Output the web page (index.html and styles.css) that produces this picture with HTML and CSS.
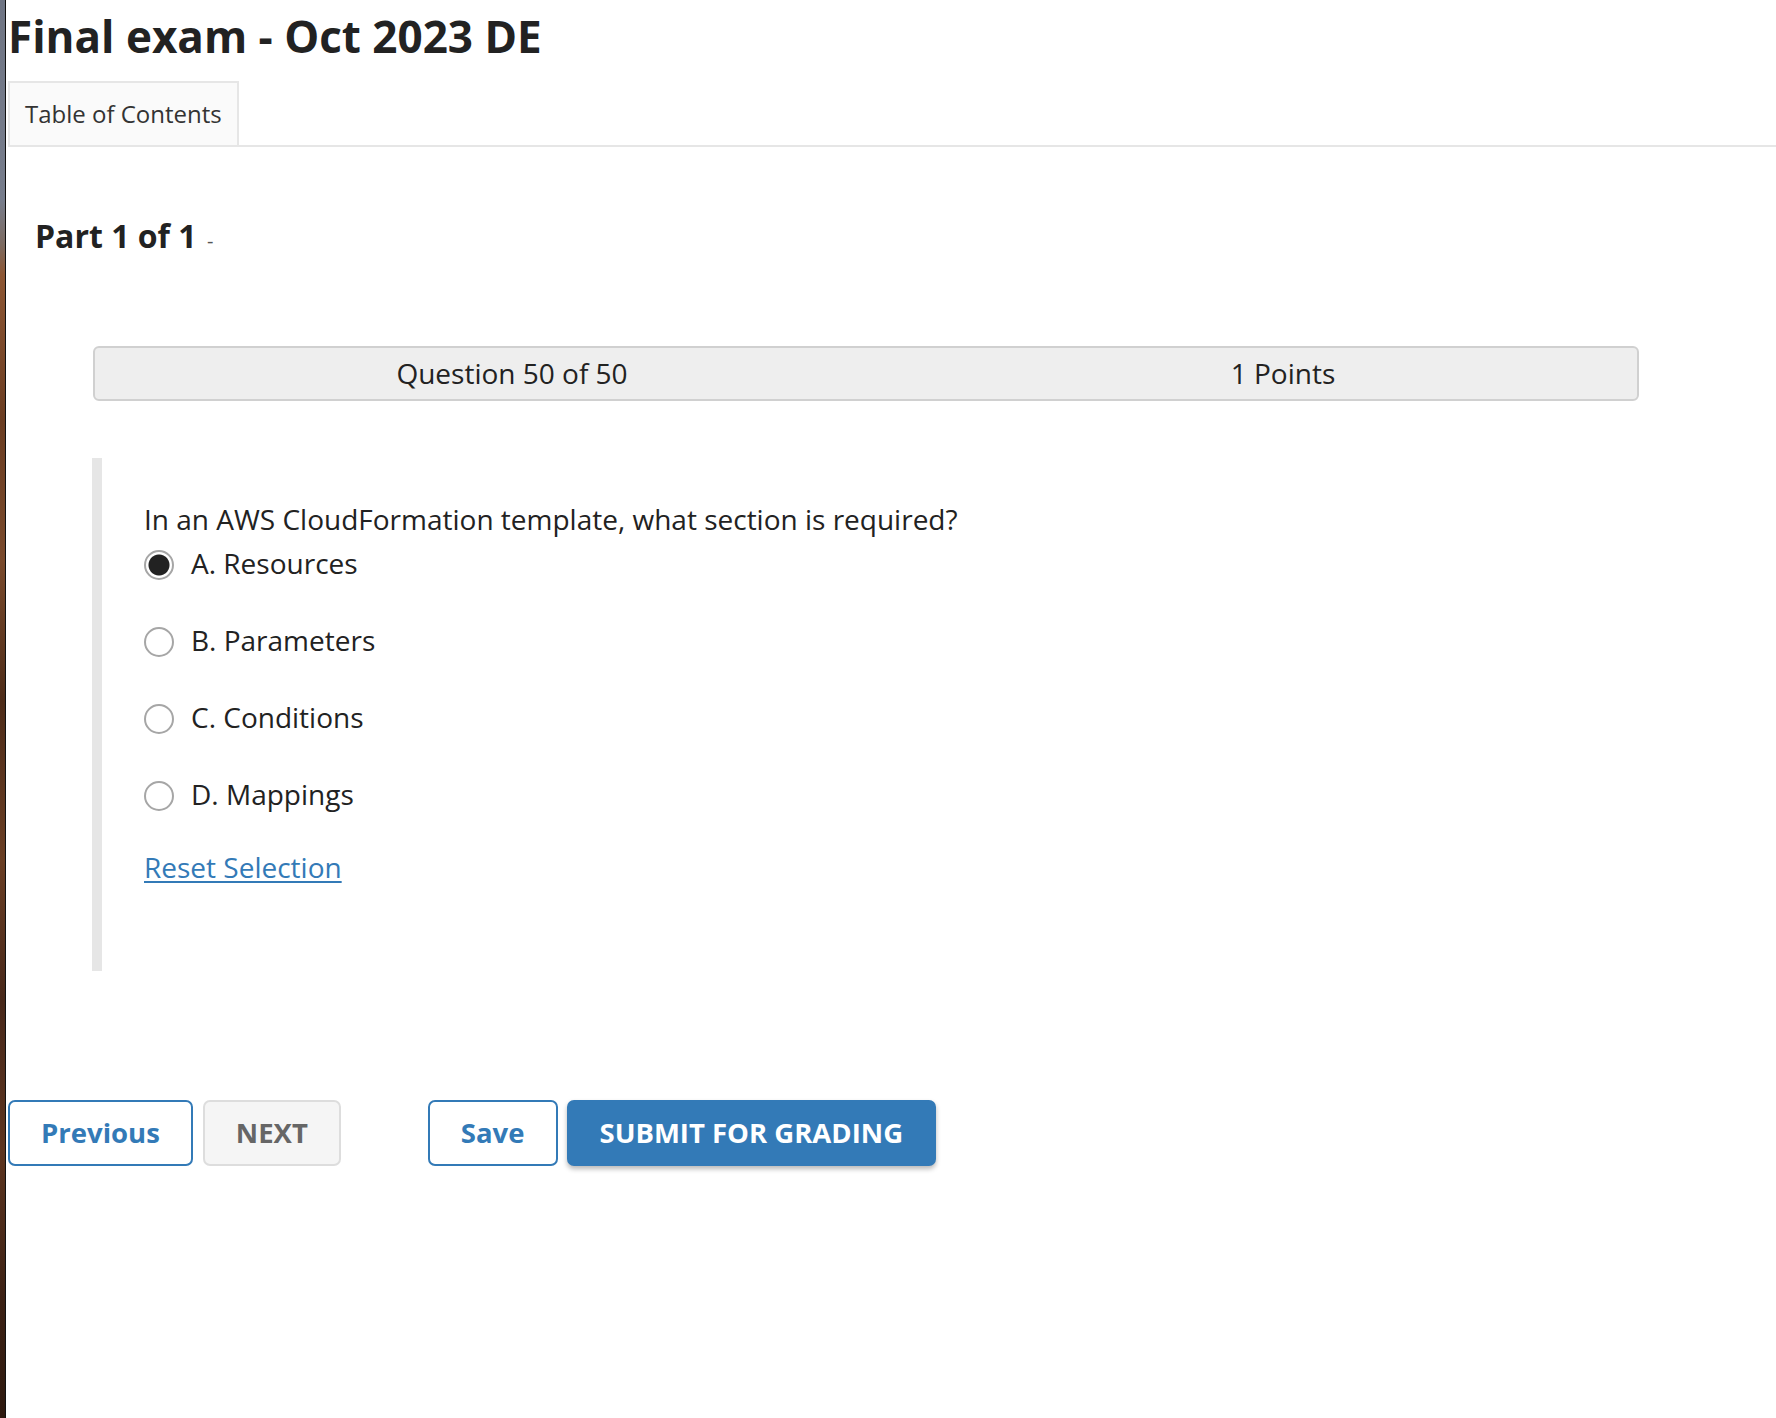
FILE: index.html
```html
<!DOCTYPE html>
<html lang="en">
<head>
<meta charset="utf-8">
<title>Final exam - Oct 2023 DE</title>
<link rel="stylesheet" href="styles.css">
</head>
<body>
<div class="desk"></div>
<main class="page">
  <h1 class="title">Final exam - Oct 2023 DE</h1>
  <div class="tabbar">
    <div class="tab">Table of Contents</div>
  </div>
  <h2 class="part">Part 1 of 1 <span class="part-dash">-</span></h2>
  <div class="qbar">
    <div class="qcell">Question 50 of 50</div>
    <div class="qcell">1 Points</div>
  </div>
  <section class="qblock">
    <p class="qtext">In an AWS CloudFormation template, what section is required?</p>
    <div class="opt"><span class="radio checked"></span><span>A. Resources</span></div>
    <div class="opt"><span class="radio"></span><span>B. Parameters</span></div>
    <div class="opt"><span class="radio"></span><span>C. Conditions</span></div>
    <div class="opt opt-last"><span class="radio"></span><span>D. Mappings</span></div>
    <a class="reset" href="#">Reset Selection</a>
  </section>
  <div class="actions">
    <button class="btn btn-outline">Previous</button>
    <button class="btn btn-disabled">NEXT</button>
    <button class="btn btn-outline btn-save">Save</button>
    <button class="btn btn-primary">SUBMIT FOR GRADING</button>
  </div>
</main>
</body>
</html>
```
FILE: styles.css
```css
html, body {
  margin: 0;
  padding: 0;
  background: #ffffff;
}
body {
  display: flex;
  min-height: 1418px;
  font-family: "Open Sans", "Noto Sans", "Liberation Sans", sans-serif;
  color: #222222;
}
.desk {
  width: 5px;
  flex: none;
  border-right: 1px solid #111111;
  background: linear-gradient(to bottom,
    #6f7584 0px, #777d8c 200px, #7c6a60 245px, #8d5633 275px,
    #6b3d22 420px, #7a4a2c 560px, #4e2c19 700px, #6a3e24 860px,
    #48281a 1000px, #5d3520 1150px, #3c2114 1300px, #2e190f 1418px);
}
.page {
  flex: 1;
  padding: 8px 0 0 2px;
  min-width: 0;
}
.title {
  margin: 0 0 17px 0;
  font-size: 44px;
  font-weight: 700;
  line-height: 56px;
  color: #222222;
}
.tabbar {
  display: flex;
  border-bottom: 2px solid #e6e6e6;
}
.tab {
  border: 2px solid #e6e6e6;
  border-bottom: none;
  background: #fafafa;
  padding: 13px 15px;
  font-size: 24px;
  line-height: 36px;
  color: #333333;
}
.part {
  margin: 70px 0 0 0;
  padding-left: 27px;
  font-size: 32px;
  font-weight: 700;
  line-height: 38px;
  color: #222222;
}
.part-dash {
  font-size: 20px;
  font-weight: 400;
  color: #555555;
  margin-left: 2px;
}
.qbar {
  margin: 86px 137px 0 85px;
  height: 51px;
  display: grid;
  grid-template-columns: 1fr 1fr;
  background: #eeeeee;
  border: 2px solid #d0d0d0;
  border-radius: 6px;
}
.qcell {
  padding-left: 63px;
  text-align: center;
  font-size: 28px;
  line-height: 51px;
  color: #222222;
}
.qblock {
  margin: 57px 0 0 84px;
  border-left: 10px solid #e6e6e6;
  padding: 40px 0 83px 42px;
  font-size: 28px;
  line-height: 42px;
}
.qtext {
  margin: 0 0 2px 0;
}
.opt {
  display: flex;
  align-items: center;
  height: 42px;
  margin-bottom: 35px;
}
.opt-last {
  margin-bottom: 31px;
}
.radio {
  flex: none;
  box-sizing: border-box;
  width: 30px;
  height: 30px;
  margin-top: 4px;
  margin-right: 17px;
  border: 2px solid #a6a6a6;
  border-radius: 50%;
  background: #ffffff;
}
.radio.checked {
  background: radial-gradient(circle, #222222 0, #222222 10px, #ffffff 11px);
}
.reset {
  display: inline-block;
  color: #337ab7;
  text-decoration: underline;
  text-underline-offset: 3px;
  text-decoration-thickness: 2px;
}
.actions {
  margin-top: 129px;
  display: flex;
  align-items: flex-start;
}
.btn {
  font-family: "Open Sans", "Noto Sans", "Liberation Sans", sans-serif;
  font-size: 27.5px;
  font-weight: 700;
  line-height: 42px;
  padding: 10px 31px;
  border: 2px solid #337ab7;
  border-radius: 7px;
  background: #ffffff;
  color: #337ab7;
  margin-right: 10px;
  cursor: pointer;
}
.btn-disabled {
  background: #f5f5f5;
  border-color: #dddddd;
  color: #666666;
  margin-right: 87px;
}
.btn-save {
  margin-right: 9px;
}
.btn-primary {
  background: #337ab7;
  color: #ffffff;
  box-shadow: 0 3px 5px rgba(0, 0, 0, 0.28);
}
```
